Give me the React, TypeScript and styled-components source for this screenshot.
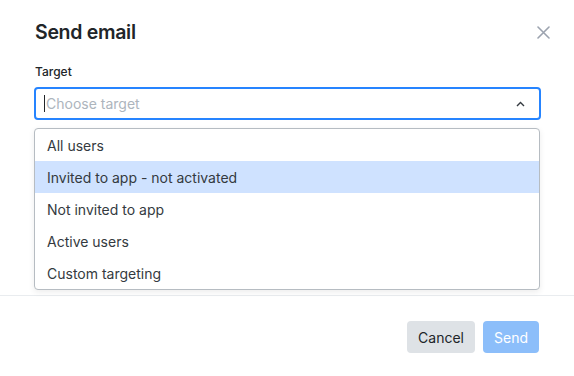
import React from 'react';
import styled, { createGlobalStyle } from 'styled-components';

const GlobalStyle = createGlobalStyle`
  html, body {
    margin: 0;
    padding: 0;
    background: #ffffff;
  }
  body {
    font-family: Inter, "Noto Sans", "Liberation Sans", sans-serif;
    color: #212529;
  }
`;

const Modal = styled.div`
  width: 574px;
  height: 376px;
  display: flex;
  flex-direction: column;
  background: #fff;
`;

const Header = styled.div`
  display: flex;
  justify-content: space-between;
  align-items: center;
  padding: 17px 23px 0 35px;
  height: 30px;
`;

const Title = styled.h2`
  margin: 0;
  font-size: 19.5px;
  font-weight: 600;
  letter-spacing: -0.3px;
  color: #212529;
`;

const CloseButton = styled.button`
  border: none;
  background: transparent;
  padding: 0;
  width: 16px;
  height: 16px;
  display: flex;
  align-items: center;
  justify-content: center;
  cursor: pointer;
`;

const Body = styled.div`
  flex: 1;
  padding: 17px 33px 0 34px;
  border-bottom: 1px solid #e9ecef;
`;

const Label = styled.label`
  display: block;
  font-size: 12px;
  font-weight: 500;
  margin: 0 0 8px 1px;
  color: #212529;
`;

const SelectWrap = styled.div`
  position: relative;
`;

const Control = styled.div`
  height: 33px;
  box-sizing: border-box;
  border: 2px solid #2684ff;
  border-radius: 4px;
  display: flex;
  align-items: center;
  padding: 0 14px 0 8px;
`;

const Cursor = styled.span`
  width: 1px;
  height: 17px;
  background: #212529;
  margin-right: 1px;
`;

const Placeholder = styled.span`
  flex: 1;
  font-size: 14px;
  color: #adb5bd;
`;

const Menu = styled.ul`
  position: absolute;
  top: 41px;
  left: 0;
  right: 1px;
  margin: 0;
  padding: 0;
  list-style: none;
  background: #fff;
  border: 1px solid #b6bcc2;
  border-radius: 4px;
  box-shadow: 0 2px 6px rgba(0, 0, 0, 0.08);
  overflow: hidden;
`;

const Option = styled.li<{ $active?: boolean }>`
  height: 32px;
  display: flex;
  align-items: center;
  padding: 0 12px;
  font-size: 14px;
  color: #343a40;
  background: ${(p) => (p.$active ? '#cfe2ff' : 'transparent')};
`;

const Footer = styled.div`
  display: flex;
  justify-content: flex-end;
  gap: 8px;
  padding: 25px 35px 23px 0;
`;

const Button = styled.button<{ $primary?: boolean }>`
  height: 32px;
  border: none;
  border-radius: 4px;
  padding: 0 11px;
  font-family: inherit;
  font-size: 14px;
  background: ${(p) => (p.$primary ? '#8cbefa' : '#dee2e6')};
  color: ${(p) => (p.$primary ? '#ffffff' : '#212529')};
`;

const options = [
  'All users',
  'Invited to app - not activated',
  'Not invited to app',
  'Active users',
  'Custom targeting',
];

export default function App() {
  return (
    <>
      <GlobalStyle />
      <Modal>
        <Header>
          <Title>Send email</Title>
          <CloseButton aria-label="Close">
            <svg width="13" height="13" viewBox="0 0 13 13">
              <path d="M1 1 L12 12 M12 1 L1 12" stroke="#9ca3af" strokeWidth="1.6" strokeLinecap="round" />
            </svg>
          </CloseButton>
        </Header>
        <Body>
          <Label>Target</Label>
          <SelectWrap>
            <Control>
              <Cursor />
              <Placeholder>Choose target</Placeholder>
              <svg width="9" height="6" viewBox="0 0 9 6">
                <path d="M1 5 L4.5 1.5 L8 5" stroke="#343a40" strokeWidth="1.4" fill="none" />
              </svg>
            </Control>
            <Menu>
              {options.map((o, i) => (
                <Option key={o} $active={i === 1}>
                  {o}
                </Option>
              ))}
            </Menu>
          </SelectWrap>
        </Body>
        <Footer>
          <Button>Cancel</Button>
          <Button $primary disabled>
            Send
          </Button>
        </Footer>
      </Modal>
    </>
  );
}
